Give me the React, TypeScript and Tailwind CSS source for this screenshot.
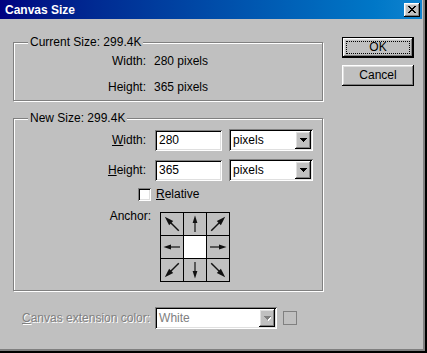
import type { ReactNode } from "react";

const raised =
  "shadow-[inset_-1px_-1px_0_#000,inset_1px_1px_0_#fff,inset_-2px_-2px_0_#808080,inset_2px_2px_0_#dfdfdf]";
const sunken =
  "shadow-[inset_1px_1px_0_#808080,inset_-1px_-1px_0_#fff,inset_2px_2px_0_#000,inset_-2px_-2px_0_#dfdfdf]";

export default function App() {
  return (
    <div className="relative h-[353px] w-[427px] overflow-hidden bg-[#c0c0c0] font-['Liberation_Sans',Arial,sans-serif] text-[12px] text-black shadow-[inset_-2px_-2px_0_#000,inset_-4px_-4px_0_#808080]">
      {/* title bar */}
      <div className="flex h-[19px] w-[422px] items-center bg-gradient-to-r from-[#000080] to-[#1084d0] pl-[5px] pr-[2px]">
        <span className="flex-1 pt-px font-bold leading-[19px] text-white">Canvas Size</span>
        <button className={`flex h-[14px] w-[16px] items-center justify-center bg-[#c0c0c0] ${raised}`}>
          <svg width="8" height="7" viewBox="0 0 8 7" shapeRendering="crispEdges">
            <path d="M0 0h2v1h1v1h2v-1h1v-1h2v1h-1v1h-1v1h-1v1h1v1h1v1h1v1h-2v-1h-1v-1h-2v1h-1v1h-2v-1h1v-1h1v-1h1v-1h-1v-1h-1v-1h-1z" fill="#000" />
          </svg>
        </button>
      </div>

      <div className="flex pl-[13px]">
        <div className="flex w-[310px] flex-col">
          <GroupBox title="Current Size: 299.4K" className="mt-[23px] h-[59px]">
            <div className="flex flex-col gap-[10px] pt-[10px] leading-[16px]">
              <div className="flex">
                <span className="w-[132px] text-right">Width:</span>
                <span className="ml-[8px]">280 pixels</span>
              </div>
              <div className="flex">
                <span className="w-[132px] text-right">Height:</span>
                <span className="ml-[8px]">365 pixels</span>
              </div>
            </div>
          </GroupBox>

          <GroupBox title="New Size: 299.4K" className="mt-[17px] h-[173px]">
            <div className="flex flex-col pt-[10px] leading-[16px]">
              <SizeRow label="Width:" mnemonic="W" value="280" />
              <div className="mt-[8px]">
                <SizeRow label="Height:" mnemonic="H" value="365" />
              </div>
              <div className="mt-[5px] flex h-[16px] items-center pl-[124px]">
                <span className={`h-[13px] w-[13px] bg-white ${sunken}`} />
                <span className="ml-[5px]">
                  <u>R</u>elative
                </span>
              </div>
              <div className="mt-[10px] flex items-start">
                <span className="-mt-[3px] w-[137px] text-right leading-[14px]">Anchor:</span>
                <AnchorGrid />
              </div>
            </div>
          </GroupBox>

          <div className="mt-[16px] flex h-[22px] items-center pl-[9px]">
            <span className="text-[#808080] [text-shadow:1px_1px_0_#fff]">
              <u>C</u>anvas extension color:
            </span>
            <Combo label="White" disabled className="ml-[5px] w-[122px]" />
            <span className="ml-[6px] h-[14px] w-[14px] border border-[#808080]" />
          </div>
        </div>

        <div className="ml-[19px] flex flex-col pt-[18px]">
          <button className={`relative h-[21px] w-[72px] border border-black bg-[#c0c0c0] leading-[19px] ${raised}`}>
            <span className="absolute inset-[3px] border border-dotted border-black" />
            OK
          </button>
          <button className={`mt-[7px] h-[21px] w-[72px] bg-[#c0c0c0] leading-[21px] ${raised}`}>
            Cancel
          </button>
        </div>
      </div>
    </div>
  );
}

function GroupBox({ title, className, children }: { title: string; className: string; children: ReactNode }) {
  return (
    <div className={`relative border border-[#808080] shadow-[1px_1px_0_#fff,inset_1px_1px_0_#fff] ${className}`}>
      <span className="absolute -top-[9px] left-[14px] bg-[#c0c0c0] px-[2px] leading-[16px]">{title}</span>
      {children}
    </div>
  );
}

function SizeRow({ label, mnemonic, value }: { label: string; mnemonic: string; value: string }) {
  return (
    <div className="flex h-[22px] items-center">
      <span className="w-[132px] text-right">
        <u>{mnemonic}</u>
        {label.slice(1)}
      </span>
      <div className={`ml-[9px] flex h-[21px] w-[67px] items-center bg-white pl-[4px] ${sunken}`}>{value}</div>
      <Combo label="pixels" className="ml-[7px] w-[84px]" />
    </div>
  );
}

function Combo({ label, disabled, className }: { label: string; disabled?: boolean; className: string }) {
  return (
    <div className={`flex h-[22px] items-center bg-white p-[2px] ${sunken} ${className}`}>
      <span className={`flex-1 pl-[2px] ${disabled ? "text-[#808080]" : ""}`}>{label}</span>
      <span className={`flex h-[18px] w-[16px] items-center justify-center bg-[#c0c0c0] ${raised}`}>
        <svg width="7" height="5" viewBox="0 0 7 5" shapeRendering="crispEdges">
          {disabled && <path d="M1 1h7l-3.5 4z" fill="#fff" />}
          <path d="M0 0h7l-3.5 4z" fill={disabled ? "#808080" : "#000"} />
        </svg>
      </span>
    </div>
  );
}

// null = the white centre cell
const arrows: (number | null)[] = [-45, 0, 45, -90, null, 90, -135, 180, 135];

function AnchorGrid() {
  return (
    <div className="ml-[9px] grid grid-cols-[repeat(3,22px)] grid-rows-[repeat(3,22px)] gap-px bg-black p-px">
      {arrows.map((a, i) => {
        const s = a !== null && a % 90 !== 0 ? 1.2 : 1;
        return (
          <div key={i} className={a === null ? "bg-white" : "bg-[#c0c0c0]"}>
            {a !== null && (
              <svg width="22" height="22" viewBox="0 0 22 22">
                <g transform={`rotate(${a} 11 11) translate(11 11) scale(${s}) translate(-11 -11)`}>
                  <line x1="11" y1="19" x2="11" y2="8" stroke="#111" strokeWidth="1.2" />
                  <path d="M11 2.5 L8.6 10 L13.4 10 Z" fill="#111" />
                </g>
              </svg>
            )}
          </div>
        );
      })}
    </div>
  );
}
